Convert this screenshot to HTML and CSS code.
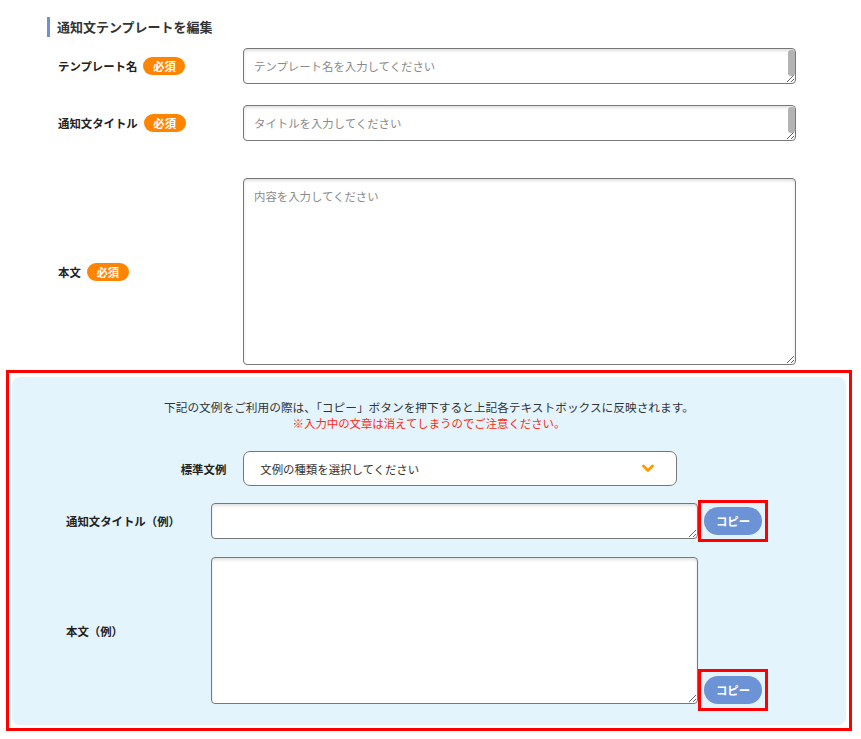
FILE: index.html
```html
<!DOCTYPE html>
<html lang="ja">
<head>
<meta charset="utf-8">
<title>通知文テンプレートを編集</title>
<link rel="stylesheet" href="styles.css">
</head>
<body>
<div class="page">
  <h2 class="heading">通知文テンプレートを編集</h2>
  <div class="form">
    <div class="row row-name">
      <div class="label">テンプレート名<span class="badge">必須</span></div>
      <div class="field">
        <textarea class="input short" placeholder="テンプレート名を入力してください"></textarea>
        <span class="thumb"></span>
      </div>
    </div>
    <div class="row row-title">
      <div class="label">通知文タイトル<span class="badge">必須</span></div>
      <div class="field">
        <textarea class="input short" placeholder="タイトルを入力してください"></textarea>
        <span class="thumb"></span>
      </div>
    </div>
    <div class="row row-body">
      <div class="label">本文<span class="badge">必須</span></div>
      <div class="field">
        <textarea class="input tall" placeholder="内容を入力してください"></textarea>
      </div>
    </div>
  </div>

  <div class="highlight">
    <div class="panel">
      <p class="note">下記の文例をご利用の際は、「コピー」ボタンを押下すると上記各テキストボックスに反映されます。</p>
      <p class="warn">※入力中の文章は消えてしまうのでご注意ください。</p>
      <div class="select-row">
        <span class="plabel-inline">標準文例</span>
        <div class="select">
          <span>文例の種類を選択してください</span>
          <svg class="chev" width="12" height="9" viewBox="0 0 12 9"><polyline points="1.5,2 6,6.5 10.5,2" fill="none" stroke="#ff9a00" stroke-width="2.8" stroke-linecap="round" stroke-linejoin="round"/></svg>
        </div>
      </div>
      <div class="ex-row ex-title">
        <div class="plabel">通知文タイトル（例）</div>
        <textarea class="ex-input ex-short"></textarea>
        <div class="btnbox"><button class="copy">コピー</button></div>
      </div>
      <div class="ex-row ex-body">
        <div class="plabel plabel-tall">本文（例）</div>
        <textarea class="ex-input ex-tall"></textarea>
        <div class="btnbox btnbox-low"><button class="copy">コピー</button></div>
      </div>
    </div>
  </div>
</div>
</body>
</html>
```
FILE: styles.css
```css
html, body {
  margin: 0;
  padding: 0;
  background: #ffffff;
}
body {
  font-family: "Noto Sans CJK JP", "Noto Sans", sans-serif;
  color: #333333;
}
.page {
  padding-top: 17px;
}
.heading {
  margin: 0 0 0 47px;
  border-left: 3px solid #6f8fd6;
  padding-left: 7px;
  height: 20px;
  line-height: 20px;
  font-size: 13px;
  font-weight: bold;
  color: #333;
}
.form {
  margin: 11px 0 0 58px;
  width: 738px;
}
.row {
  display: flex;
  align-items: center;
}
.row-name { margin-bottom: 21px; }
.row-title { margin-bottom: 37px; }
.label {
  width: 185px;
  flex: none;
  display: flex;
  align-items: center;
  font-size: 11.4px;
  font-weight: bold;
  color: #222;
}
.badge {
  display: inline-block;
  margin-left: 6px;
  width: 42px;
  height: 18px;
  line-height: 18px;
  border-radius: 9px;
  background: #ff8400;
  color: #fff;
  text-align: center;
  font-size: 11.4px;
  font-weight: bold;
}
.field {
  position: relative;
  width: 553px;
  flex: none;
}
.input {
  display: block;
  width: 553px;
  box-sizing: border-box;
  border: 1px solid #777;
  border-radius: 4px;
  padding: 9px 10px 10px;
  font-family: inherit;
  font-size: 11.4px;
  line-height: 17px;
  color: #333;
  background: #fff;
  box-shadow: inset 0 2px 3px rgba(0, 0, 0, 0.12);
  margin: 0;
}
.input::placeholder {
  color: #8a8a8a;
}
.short { height: 36px; overflow: hidden; }
.tall { height: 187px; }
.thumb {
  position: absolute;
  right: 1px;
  top: 2px;
  width: 7px;
  height: 26px;
  border-radius: 3px;
  background: #b3b3b3;
}
.highlight {
  margin: 5px 0 0 6px;
  width: 846px;
  box-sizing: border-box;
  border: 3px solid #ff0000;
  padding: 4px 3px 3px 3px;
}
.panel {
  background: #e3f4fd;
  border-radius: 8px;
  padding: 21px 0 21px 54px;
}
.note, .warn {
  margin: 0 0 0 -54px;
  text-align: center;
  font-size: 11.4px;
  line-height: 17px;
}
.note { color: #333; font-size: 11.7px; }
.warn { color: #ff2a12; }
.select-row {
  margin: 19px 0 0 -54px;
  display: flex;
  justify-content: center;
  align-items: center;
  gap: 17px;
}
.plabel-inline {
  font-size: 11.4px;
  font-weight: bold;
  color: #222;
}
.select {
  width: 434px;
  height: 35px;
  box-sizing: border-box;
  border: 1px solid #777;
  border-radius: 7px;
  background: #fff;
  padding: 0 22px 0 16px;
  display: flex;
  align-items: center;
  justify-content: space-between;
  font-size: 11.4px;
  color: #333;
}
.chev { display: block; }
.ex-row {
  display: flex;
}
.ex-title {
  margin-top: 14px;
  align-items: center;
}
.ex-body {
  margin-top: 15px;
  align-items: flex-end;
}
.plabel {
  width: 145px;
  flex: none;
  font-size: 11.4px;
  font-weight: bold;
  color: #222;
}
.plabel-tall {
  align-self: flex-start;
  height: 147px;
  display: flex;
  align-items: center;
}
.ex-input {
  display: block;
  width: 487px;
  flex: none;
  box-sizing: border-box;
  border: 1px solid #777;
  border-radius: 4px;
  background: #fff;
  box-shadow: inset 0 2px 3px rgba(0, 0, 0, 0.12);
  margin: 0;
  padding: 8px;
  font-family: inherit;
  font-size: 11.4px;
}
.ex-short { height: 36px; overflow: hidden; }
.ex-tall { height: 147px; align-self: flex-start; }
.btnbox {
  border: 3px solid #ff0000;
  padding: 4px 3px;
  flex: none;
}
.btnbox-low {
  margin-bottom: -7px;
}
.copy {
  display: block;
  width: 58px;
  height: 28px;
  border: none;
  border-radius: 14px;
  background: #6b93d6;
  color: #fff;
  font-family: inherit;
  font-size: 11.4px;
  font-weight: bold;
  padding: 0;
}
```
